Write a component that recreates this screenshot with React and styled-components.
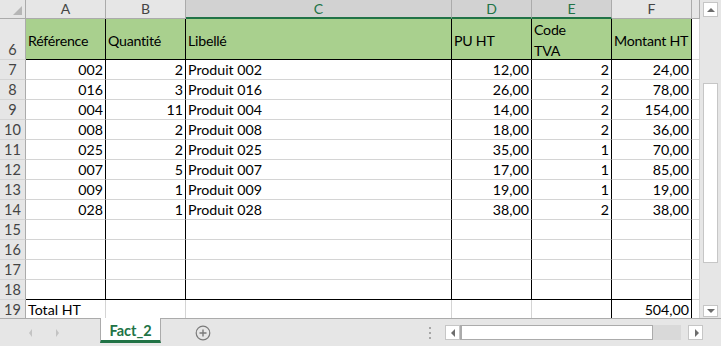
import React from 'react';
import styled, { createGlobalStyle } from 'styled-components';

const GlobalStyle = createGlobalStyle`
  html, body {
    margin: 0;
    padding: 0;
    overflow: hidden;
    background: #ffffff;
  }
  body {
    font-family: Lato, 'Liberation Sans', sans-serif;
  }
`;

const Window = styled.div`
  width: 721px;
  height: 346px;
  display: flex;
  flex-direction: column;
  background: #e6e6e6;
  overflow: hidden;
`;

const Main = styled.div`
  display: flex;
  height: 318px;
`;

const Sheet = styled.div`
  width: 700px;
  height: 318px;
  overflow: hidden;
  background: #ffffff;
  display: grid;
  grid-template-columns: 26px 80px 80px 266px 80px 80px 80px 8px;
  grid-template-rows: 19px 41px repeat(13, 20px);
  font-size: 14.2px;
  color: #000000;
`;

const Corner = styled.div`
  box-sizing: border-box;
  background: #e6e6e6;
  border-right: 1px solid #ababab;
  border-bottom: 1px solid #ababab;
  display: flex;
  align-items: flex-end;
  justify-content: flex-end;
  padding: 0 3px 3px 0;

  &::after {
    content: '';
    width: 0;
    height: 0;
    border-left: 9px solid transparent;
    border-bottom: 9px solid #b6b6b6;
  }
`;

const ColHead = styled.div`
  box-sizing: border-box;
  background: ${(p) => (p.$sel ? '#d2d2d2' : '#e6e6e6')};
  color: ${(p) => (p.$sel ? '#217346' : '#444444')};
  border-right: 1px solid #ababab;
  border-bottom: ${(p) => (p.$sel ? '2px solid #217346' : '1px solid #ababab')};
  display: flex;
  align-items: center;
  justify-content: center;
  font-size: 14px;
  padding-bottom: ${(p) => (p.$sel ? '0' : '1px')};
`;

const RowHead = styled.div`
  box-sizing: border-box;
  background: #e6e6e6;
  color: #444444;
  border-right: 1px solid #ababab;
  border-bottom: 1px solid #d4d4d4;
  display: flex;
  align-items: flex-end;
  justify-content: center;
  font-size: 14.5px;
  line-height: 19px;
`;

const Cell = styled.div`
  box-sizing: border-box;
  background: ${(p) => p.$fill || '#ffffff'};
  border-right: 1px solid ${(p) => (p.$r ? '#000000' : '#d4d4d4')};
  border-bottom: 1px solid ${(p) => (p.$b ? '#000000' : '#d4d4d4')};
  display: flex;
  align-items: center;
  justify-content: ${(p) => (p.$num ? 'flex-end' : 'flex-start')};
  padding: 0 2px 0 2px;
  line-height: 19px;
  white-space: nowrap;
  overflow: hidden;
`;

const HeadCell = styled(Cell)`
  padding-top: 2px;
  line-height: 21px;
  letter-spacing: -0.25px;
`;

const VScroll = styled.div`
  width: 21px;
  box-sizing: border-box;
  padding: 2px 3px 1px 3px;
  display: flex;
  flex-direction: column;
  background: #e6e6e6;
`;

const ScrollButton = styled.div`
  box-sizing: border-box;
  width: 15px;
  height: ${(p) => p.$h || 15}px;
  background: #ffffff;
  border: 1px solid #c6c6c6;
  display: flex;
  align-items: center;
  justify-content: center;
  flex-shrink: 0;
`;

const VThumb = styled.div`
  box-sizing: border-box;
  width: 15px;
  height: 180px;
  margin-top: 66px;
  background: #ffffff;
  border: 1px solid #c6c6c6;
`;

const Fill = styled.div`
  flex: 1;
`;

const TabBar = styled.div`
  height: 28px;
  box-sizing: border-box;
  border-top: 1px solid #ababab;
  display: flex;
  align-items: flex-start;
  background: #e6e6e6;
`;

const Nav = styled.div`
  width: 100px;
  height: 27px;
  display: flex;
  align-items: center;
  gap: 24px;
  padding-left: 29px;
  box-sizing: border-box;
`;

const NavArrow = styled.span`
  width: 0;
  height: 0;
  border-top: 4px solid transparent;
  border-bottom: 4px solid transparent;
  ${(p) => (p.$dir === 'left' ? 'border-right: 3px solid #c3c3c3;' : 'border-left: 3px solid #c3c3c3;')}
`;

const Tab = styled.div`
  box-sizing: border-box;
  width: 61px;
  height: 25px;
  background: #ffffff;
  border-left: 1px solid #ababab;
  border-right: 1px solid #ababab;
  border-bottom: 3px solid #217346;
  margin-top: -1px;
  display: flex;
  align-items: center;
  justify-content: center;
  color: #217346;
  font-weight: 700;
  font-size: 14.5px;
  padding-top: 2px;
`;

const AddButton = styled.div`
  margin-left: 34px;
  height: 27px;
  display: flex;
  align-items: center;
`;

const Dots = styled.div`
  height: 27px;
  display: flex;
  flex-direction: column;
  justify-content: center;
  gap: 3px;
  margin-right: 14px;

  span {
    width: 2px;
    height: 2px;
    background: #a6a6a6;
  }
`;

const HScroll = styled.div`
  display: flex;
  align-items: center;
  height: 27px;
  margin-right: 18px;
`;

const HTrack = styled.div`
  box-sizing: border-box;
  width: 221px;
  height: 15px;
  background: #d9d9d9;
  display: flex;
  margin-right: 7px;
`;

const HThumb = styled.div`
  box-sizing: border-box;
  width: 193px;
  height: 15px;
  background: #ffffff;
  border: 1px solid #ababab;
  border-left-width: 2px;
`;

const Arrow = ({ dir }) => {
  const pts = {
    up: '1,6 5,2 9,6',
    down: '1,2 5,6 9,2',
    left: '6,1 2,5 6,9',
    right: '3,1 7,5 3,9',
  };
  const vertical = dir === 'up' || dir === 'down';
  return (
    <svg width={vertical ? 10 : 8} height={vertical ? 8 : 10} viewBox={vertical ? '0 0 10 8' : '0 0 8 10'}>
      <polygon points={pts[dir]} fill="#6d6d6d" />
    </svg>
  );
};

const columns = ['A', 'B', 'C', 'D', 'E', 'F', ''];
const selected = ['C', 'D', 'E'];

const headers = ['Référence', 'Quantité', 'Libellé', 'PU HT', 'Code\nTVA', 'Montant HT'];

const items = [
  ['002', '2', 'Produit 002', '12,00', '2', '24,00'],
  ['016', '3', 'Produit 016', '26,00', '2', '78,00'],
  ['004', '11', 'Produit 004', '14,00', '2', '154,00'],
  ['008', '2', 'Produit 008', '18,00', '2', '36,00'],
  ['025', '2', 'Produit 025', '35,00', '1', '70,00'],
  ['007', '5', 'Produit 007', '17,00', '1', '85,00'],
  ['009', '1', 'Produit 009', '19,00', '1', '19,00'],
  ['028', '1', 'Produit 028', '38,00', '2', '38,00'],
  ['', '', '', '', '', ''],
  ['', '', '', '', '', ''],
  ['', '', '', '', '', ''],
  ['', '', '', '', '', ''],
];

// colonnes texte : C (libellé) ; les autres sont cadrées à droite
const numeric = [true, true, false, true, true, true];

function App() {
  return (
    <>
      <GlobalStyle />
      <Window>
        <Main>
          <Sheet>
            <Corner />
            {columns.map((c, i) => (
              <ColHead key={'h' + i} $sel={selected.includes(c)}>
                {c}
              </ColHead>
            ))}

            <RowHead>6</RowHead>
            {headers.map((h, i) => (
              <HeadCell key={'t' + i} $fill="#a9d08e" $r $b>
                <div>
                  {h.split('\n').map((part, j) => (
                    <div key={j}>{part}</div>
                  ))}
                </div>
              </HeadCell>
            ))}
            <Cell />

            {items.map((row, r) => (
              <React.Fragment key={'r' + r}>
                <RowHead>{r + 7}</RowHead>
                {row.map((v, i) => (
                  <Cell key={i} $r $b={r === items.length - 1} $num={numeric[i]}>
                    {v}
                  </Cell>
                ))}
                <Cell />
              </React.Fragment>
            ))}

            <RowHead>19</RowHead>
            <Cell>Total HT</Cell>
            <Cell />
            <Cell />
            <Cell />
            <Cell $r />
            <Cell $r $num>
              504,00
            </Cell>
            <Cell />
          </Sheet>

          <VScroll>
            <ScrollButton>
              <Arrow dir="up" />
            </ScrollButton>
            <VThumb />
            <Fill />
            <ScrollButton $h={12}>
              <Arrow dir="down" />
            </ScrollButton>
          </VScroll>
        </Main>

        <TabBar>
          <Nav>
            <NavArrow $dir="left" />
            <NavArrow $dir="right" />
          </Nav>
          <Tab>Fact_2</Tab>
          <AddButton>
            <svg width="16" height="16" viewBox="0 0 16 16">
              <circle cx="8" cy="8" r="6.8" fill="none" stroke="#7a7a7a" strokeWidth="1.2" />
              <path d="M8 4.5v7M4.5 8h7" stroke="#7a7a7a" strokeWidth="1.4" />
            </svg>
          </AddButton>
          <Fill />
          <Dots>
            <span />
            <span />
            <span />
          </Dots>
          <HScroll>
            <ScrollButton>
              <Arrow dir="left" />
            </ScrollButton>
            <HTrack>
              <HThumb />
            </HTrack>
            <ScrollButton $h={15}>
              <Arrow dir="right" />
            </ScrollButton>
          </HScroll>
        </TabBar>
      </Window>
    </>
  );
}

export default App;
